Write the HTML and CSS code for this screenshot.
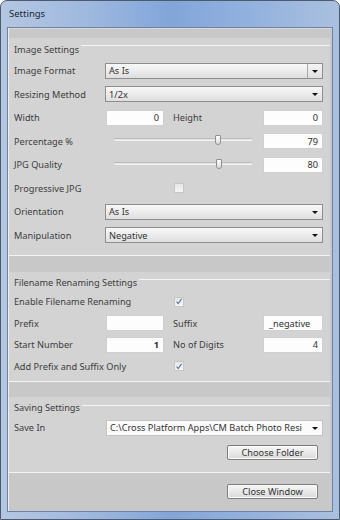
FILE: index.html
```html
<!DOCTYPE html>
<html>
<head>
<meta charset="utf-8">
<title>Settings</title>
<link rel="stylesheet" href="styles.css">
</head>
<body>
<div class="window">
  <div class="titlebar"><span class="title">Settings</span></div>
  <div class="client">
    <section class="group g1">
      <div class="legend"><span class="legend-text">Image Settings</span><span class="rule"></span></div>
      <div class="row">
        <span class="label">Image Format</span>
        <div class="combo combo-btn"><span class="combo-text">As Is</span><span class="drop"><span class="arrow"></span></span></div>
      </div>
      <div class="row">
        <span class="label">Resizing Method</span>
        <div class="combo"><span class="combo-text">1/2x</span><span class="drop"><span class="arrow"></span></span></div>
      </div>
      <div class="row">
        <span class="label">Width</span>
        <div class="pair">
          <span class="input small">0</span>
          <span class="label2">Height</span>
          <span class="input wide">0</span>
        </div>
      </div>
      <div class="row">
        <span class="label">Percentage %</span>
        <div class="pair">
          <div class="slider"><div class="track"><span class="thumb" style="left:75%"></span></div></div>
          <span class="input wide">79</span>
        </div>
      </div>
      <div class="row">
        <span class="label">JPG Quality</span>
        <div class="pair">
          <div class="slider"><div class="track"><span class="thumb" style="left:76%"></span></div></div>
          <span class="input wide">80</span>
        </div>
      </div>
      <div class="row">
        <span class="label">Progressive JPG</span>
        <div class="pair"><span class="check"></span></div>
      </div>
      <div class="row">
        <span class="label">Orientation</span>
        <div class="combo"><span class="combo-text">As Is</span><span class="drop"><span class="arrow"></span></span></div>
      </div>
      <div class="row">
        <span class="label">Manipulation</span>
        <div class="combo"><span class="combo-text">Negative</span><span class="drop"><span class="arrow"></span></span></div>
      </div>
    </section>

    <section class="group g2">
      <div class="legend"><span class="legend-text">Filename Renaming Settings</span><span class="rule"></span></div>
      <div class="row">
        <span class="label wide-label">Enable Filename Renaming</span>
        <div class="pair"><span class="check on"><svg viewBox="0 0 9 9" width="9" height="9"><path d="M1.8 4.6 L3.6 6.8 L7.4 1.6" fill="none" stroke="#5a76a6" stroke-width="1.3"/></svg></span></div>
      </div>
      <div class="row">
        <span class="label">Prefix</span>
        <div class="pair">
          <span class="input small"></span>
          <span class="label2">Suffix</span>
          <span class="input wide left">_negative</span>
        </div>
      </div>
      <div class="row">
        <span class="label">Start Number</span>
        <div class="pair">
          <span class="input small bold">1</span>
          <span class="label2">No of Digits</span>
          <span class="input wide">4</span>
        </div>
      </div>
      <div class="row">
        <span class="label wide-label">Add Prefix and Suffix Only</span>
        <div class="pair"><span class="check on"><svg viewBox="0 0 9 9" width="9" height="9"><path d="M1.8 4.6 L3.6 6.8 L7.4 1.6" fill="none" stroke="#5a76a6" stroke-width="1.3"/></svg></span></div>
      </div>
    </section>

    <section class="group g3">
      <div class="legend"><span class="legend-text">Saving Settings</span><span class="rule"></span></div>
      <div class="row">
        <span class="label">Save In</span>
        <div class="combo flat"><span class="combo-text">C:\Cross Platform Apps\CM Batch Photo Resi</span><span class="drop"><span class="arrow"></span></span></div>
      </div>
      <div class="btn-row"><span class="button">Choose Folder</span></div>
    </section>

    <div class="footer"><span class="button">Close Window</span></div>
  </div>
</div>
</body>
</html>
```

FILE: styles.css
```css
* { box-sizing: border-box; }

html, body {
  margin: 0;
  padding: 0;
  background: #ffffff;
}

body {
  font-family: "Noto Sans", "Open Sans", sans-serif;
  font-size: 9.2px;
  color: #3d3d3d;
}

.window {
  width: 340px;
  height: 520px;
  border: 1px solid #4d5b6c;
  border-radius: 7px 7px 0 0;
  background: linear-gradient(to right, #b4c7e2 0%, #9fb9df 25%, #82a6da 50%, #93b2de 75%, #aac0df 100%);
  padding: 0 6px 7px 6px;
  display: flex;
  flex-direction: column;
}

.titlebar {
  height: 26px;
  display: flex;
  align-items: center;
  padding-left: 2px;
  padding-bottom: 1px;
}

.title {
  font-size: 9.5px;
  color: #1e2836;
}

.client {
  flex: 1;
  background: #c8c8c8;
  border: 1px solid #6f83a0;
  box-shadow: inset 1px 0 0 #eeeeee, inset 0 1px 0 #d8d8d8;
  padding: 10px 1px 0 1px;
  display: flex;
  flex-direction: column;
}

.group {
  background: #d3d3d3;
  border-bottom: 1px solid #f4f4f4;
  padding: 0 7px 0 5px;
  margin-right: 1px;
}

.g1 { height: 218px; }
.g2 { height: 110px; margin-top: 16px; }
.g3 { height: 76px; margin-top: 15px; }

.legend {
  display: flex;
  align-items: center;
  height: 21px;
  margin-right: -7px;
}

.g2 .legend { height: 19px; }
.g3 .legend { height: 20px; }

.legend-text {
  white-space: nowrap;
  padding-right: 2px;
  margin-top: 1px;
}

.rule {
  flex: 1;
  height: 1px;
  background: #f4f4f4;
  margin-top: -6px;
}

.g2 .rule, .g3 .rule { margin-top: -4px; }

.row {
  display: flex;
  align-items: center;
  height: 23.5px;
}

.g2 .row { height: 21.5px; }
.g3 .row { height: 21px; }

.label {
  width: 91px;
  flex: none;
  white-space: nowrap;
}

.wide-label { overflow: visible; }

.combo {
  flex: 1;
  height: 16px;
  display: flex;
  align-items: center;
  border: 1px solid #8e8e8e;
  background: linear-gradient(#f8f8f8, #ececec 50%, #dedede);
  min-width: 0;
}

.combo.flat {
  background: #fbfbfb;
  border-color: #c4c4c4;
  margin-left: 1px;
}

.combo-text {
  flex: 1;
  padding-left: 3px;
  white-space: nowrap;
  overflow: hidden;
  min-width: 0;
  color: #333333;
}

.drop {
  width: 15px;
  height: 100%;
  display: flex;
  align-items: center;
  justify-content: center;
  flex: none;
}

.combo-btn .drop {
  border-left: 1px solid #a8a8a8;
  background: linear-gradient(#f4f4f4, #e0e0e0);
}

.arrow {
  width: 0;
  height: 0;
  border-left: 3px solid transparent;
  border-right: 3px solid transparent;
  border-top: 3px solid #111111;
  margin-top: 1px;
}

.pair {
  flex: 1;
  display: flex;
  align-items: center;
  height: 100%;
}

.input {
  height: 16px;
  background: #fdfdfd;
  border: 1px solid #cfcfcf;
  display: flex;
  align-items: center;
  justify-content: flex-end;
  padding: 0 4px;
  color: #2e2e2e;
  flex: none;
}

.input.small { width: 58px; margin-left: 1px; }
.input.wide { width: 60px; }
.input.left { justify-content: flex-start; padding-left: 5px; }
.input.bold { font-weight: 700; }

.label2 {
  flex: 1;
  padding-left: 9px;
  white-space: nowrap;
}

.slider {
  flex: 1;
  height: 100%;
  display: flex;
  align-items: center;
  padding: 0 11px 0 9px;
}

.track {
  position: relative;
  flex: 1;
  height: 3px;
  background: #e4e4e4;
  border-top: 1px solid #bdbdbd;
  border-bottom: 1px solid #f2f2f2;
  margin-top: -3px;
}

.thumb {
  position: absolute;
  top: -4px;
  width: 6px;
  height: 10px;
  margin-left: -3px;
  border: 1px solid #8f8f8f;
  border-radius: 1px 1px 3px 3px;
  background: linear-gradient(#fbfbfb, #dedede);
}

.check {
  width: 10px;
  height: 10px;
  margin-left: 69px;
  border: 1px solid #c6c6c6;
  background: linear-gradient(#e6e6e6, #f6f6f6);
  display: flex;
  align-items: center;
  justify-content: center;
}

.btn-row {
  display: flex;
  justify-content: flex-end;
  padding-top: 7px;
  padding-right: 5px;
}

.button {
  width: 91px;
  height: 15px;
  display: flex;
  align-items: center;
  justify-content: center;
  border: 1px solid #7d7d7d;
  border-radius: 2px;
  background: linear-gradient(#f6f6f6, #e9e9e9 50%, #d9d9d9);
  color: #333333;
  box-shadow: inset 0 0 0 1px #fbfbfb;
}

.footer {
  flex: 1;
  display: flex;
  justify-content: flex-end;
  align-items: flex-start;
  padding-top: 11px;
  padding-right: 13px;
}
```
